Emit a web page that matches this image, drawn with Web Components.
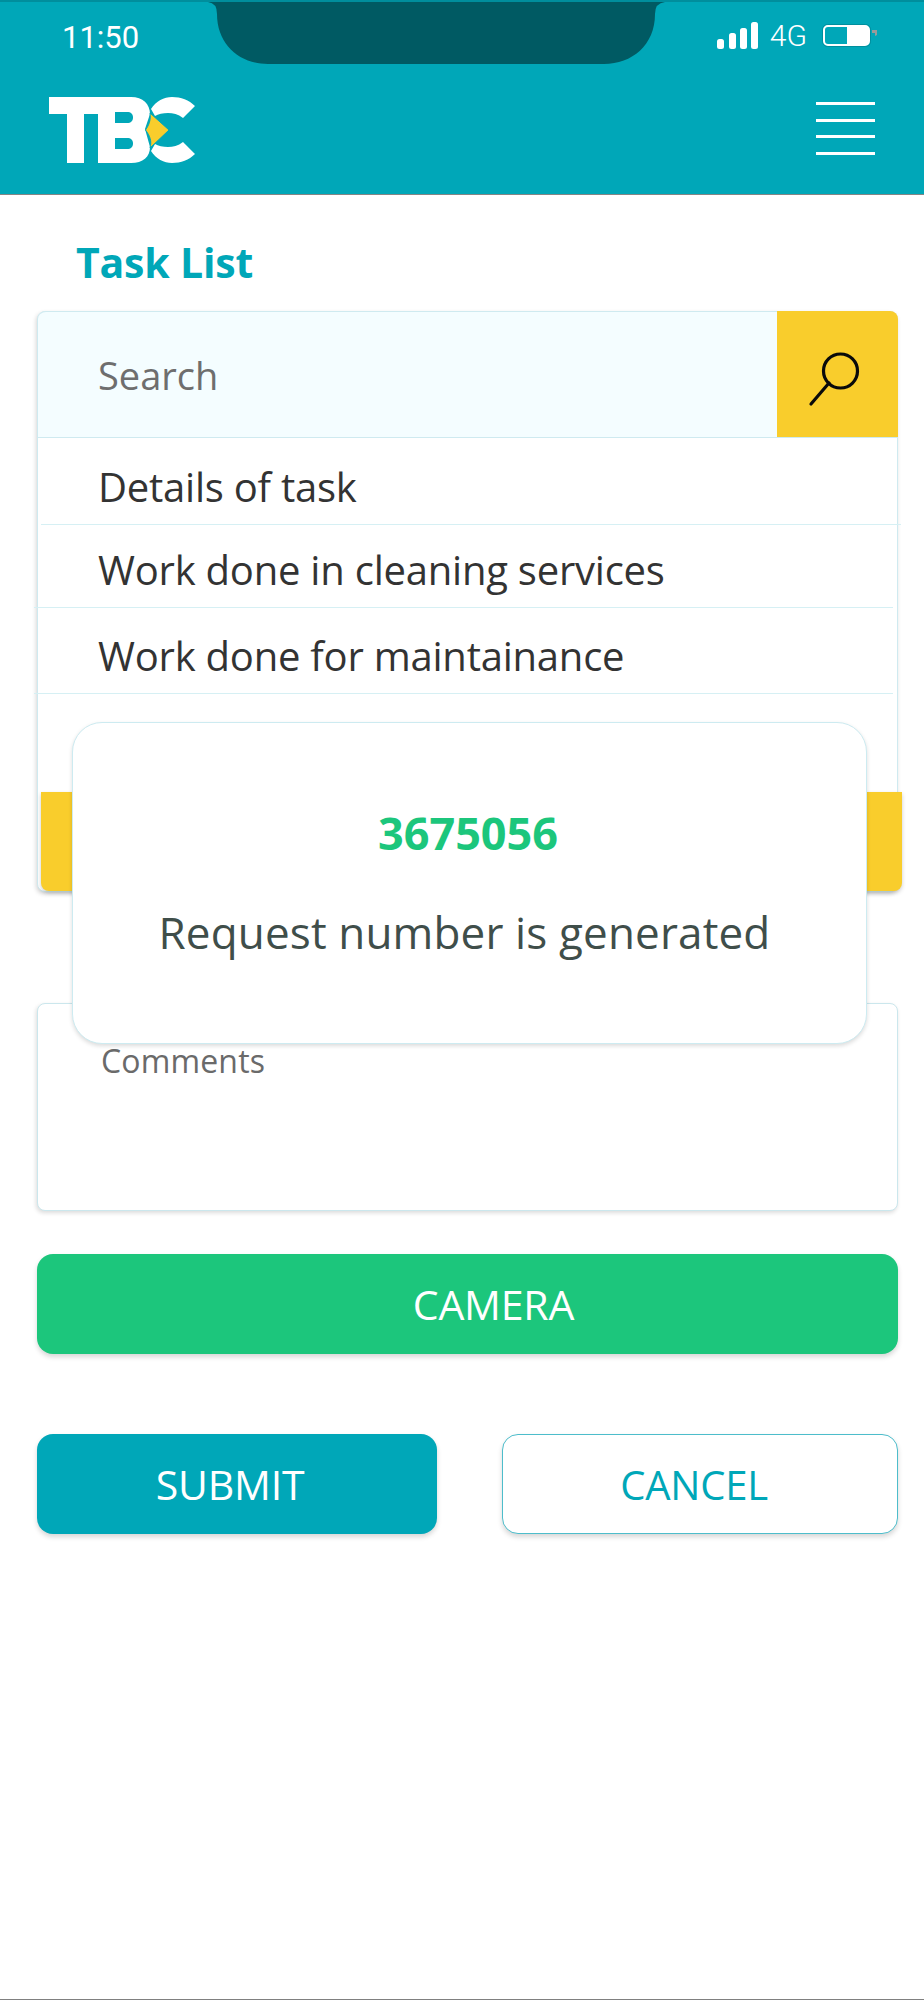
<!DOCTYPE html>
<html lang="en"><head><meta charset="utf-8"><title>Task List</title>
<style>
html,body{margin:0;padding:0;background:#fff}
body{font-family:"Open Sans","Noto Sans",sans-serif;color:#2b2b2b}
</style></head>
<body>
<app-page>
  <top-bar slot="header"></top-bar>
  <page-title>Task List</page-title>
  <task-card>
    <search-row placeholder="Search"></search-row>
    <task-row h="87" inset>Details of task</task-row>
    <task-row h="83" wide>Work done in cleaning services</task-row>
    <task-row h="86" wide>Work done for maintainance</task-row>
  </task-card>
  <comments-box>Comments</comments-box>
  <action-button kind="green" style="margin-top:43px" shift="52">CAMERA</action-button>
  <button-row>
    <action-button kind="teal" style="width:400px" shift="-14">SUBMIT</action-button>
    <action-button kind="outline" style="width:396px;font-size:40px" shift="-12">CANCEL</action-button>
  </button-row>
  <result-modal slot="overlay"><span slot="num">3675056</span>Request number is generated</result-modal>
</app-page>
<script>
function def(name, css, html, init){
  customElements.define(name, class extends HTMLElement{
    constructor(){super();const r=this.attachShadow({mode:'open'});r.innerHTML='<style>'+css+'</style>'+html;}
    connectedCallback(){ if(init) init(this, this.shadowRoot); }
  });
}
def('app-page',`
  :host{display:flex;flex-direction:column;min-height:2000px;position:relative;box-sizing:border-box;border-bottom:1px solid #808080;overflow:hidden;background:#fff}
  main{display:flex;flex-direction:column;padding:0 26px 0 37px}
`,`<slot name="header"></slot><main><slot></slot></main><slot name="overlay"></slot>`);

def('top-bar',`
  :host{display:block;position:relative;height:195px;box-sizing:border-box;background:#00A7B8;border-top:2px solid #008E9D;border-bottom:1px solid #858585;color:#fff}
  .status{display:flex;align-items:center;height:72px;padding:0 47px 0 62px;font-family:Roboto,sans-serif}
  .time{font-size:31px;line-height:1;margin-top:-2px}
  .right{margin-left:auto;margin-top:-5px;display:flex;align-items:center;gap:12px}
  .g4{font-size:30px;font-weight:300;line-height:1}
  .nav{display:flex;align-items:center;justify-content:space-between;padding:23px 49px 0 49px}
  .menu{display:flex;flex-direction:column;gap:13.6px;width:59px;margin-top:-4px}
  .menu i{display:block;height:3px;background:#fff}
  .notch{position:absolute;left:0;top:0}
  svg{display:block}
`,`
  <svg class="notch" width="924" height="66" viewBox="0 0 924 66"><path fill="#005A63" d="M208 0Q217 1 217 12C217 43 240 62 268 62H604C632 62 655 43 655 12Q655 1 665 0Z"/></svg>
  <div class="status">
    <span class="time">11:50</span>
    <div class="right">
      <svg width="41" height="28" viewBox="0 0 41 28"><g fill="#fff"><rect x="0" y="17" width="7" height="10" rx="2.5"/><rect x="12" y="11" width="7" height="16" rx="2.5"/><rect x="23" y="6" width="7" height="21" rx="2.5"/><rect x="34" y="0" width="7" height="27" rx="2.5"/></g></svg>
      <span class="g4">4G</span>
      <svg width="56" height="26" viewBox="0 0 56 26" style="margin-left:2px"><rect x="1.500" y="1.500" width="48" height="22" rx="5" fill="#00A7B8" stroke="#008E9D"/><rect x="3" y="3" width="45" height="19" rx="4" fill="none" stroke="#fff" stroke-width="2"/><path d="M26 3H44a4 4 0 0 1 4 4V18a4 4 0 0 1-4 4H26Z" fill="#fff"/><path d="M51 7h5v5l-2 1v-3h-3Z" fill="#9a9a9a"/></svg>
    </div>
  </div>
  <div class="nav">
    <svg width="147" height="67" viewBox="49 97 147 67" role="img" aria-label="TBC logo">
      <path fill="#fff" d="M49 97H100V114H84V163H67V114H49Z"/>
      <path fill="#fff" fill-rule="evenodd" d="M98 97H131C143 97 150 104 150 114L145 129L150 147C150 157 143 163 131 163H98ZM115 112V123H127C131 123 133 121 133 117.500C133 114 131 112 127 112ZM115 138V149H127C131 149 133 147 133 143.500C133 140 131 138 127 138Z"/>
      <path fill="#fff" d="M151 109C156 101 164 97 172 97C181 97 189 100 195 106L183 118C178 114 173 113 168 113C163 113 158 114 155 116Z"/>
      <path fill="#fff" d="M151 151C156 159 164 163 172 163C181 163 189 160 195 154L183 142C178 146 173 147 168 147C163 147 158 146 155 144Z"/>
      <path fill="#F9CD2C" stroke="#00A7B8" stroke-width="1" d="M150 113L169 130L150 148C152 141 150 136 145.500 130C149 125 151 120 150 113Z"/>
    </svg>
    <div class="menu"><i></i><i></i><i></i><i></i></div>
  </div>`);

def('page-title',`
  :host{display:flex;align-items:center;height:116px;padding:18px 0 0 39px;box-sizing:border-box;font-size:41px;font-weight:700;color:#00A7B8;letter-spacing:-.2px;line-height:1}
`,`<slot></slot>`);

def('task-card',`
  :host{display:flex;flex-direction:column;height:581px;box-sizing:border-box;border:1px solid #CFEAF0;border-radius:8px;box-shadow:-1px 2px 4px rgba(0,0,0,.16);background:#fff}
  .cta{margin:auto -5px 0 3px;height:99px;background:#F9CD2C;border-radius:0 0 8px 8px;box-shadow:0 2px 4px rgba(0,0,0,.2)}
`,`<slot></slot><div class="cta"></div>`);

def('search-row',`
  :host{display:flex;height:127px;box-sizing:border-box;border-bottom:1px solid #CFEAF0;margin:-1px -1px 0 0}
  .field{flex:1;display:flex;align-items:center;padding:0 0 0 60px;background:#F4FDFF;font-size:38px;color:#6e6e6e;border-top:1px solid #CFEAF0;border-radius:8px 0 0 0}
  .btn{width:121px;background:#F9CD2C;border-radius:0 8px 0 0;display:flex;align-items:center;justify-content:center}
  svg{display:block}
`,`<div class="field"></div><div class="btn"><svg width="121" height="126" viewBox="0 0 121 126"><circle cx="63.500" cy="60" r="17" fill="none" stroke="#0a0a0a" stroke-width="3.200"/><path d="M52 72L34 93" stroke="#0a0a0a" stroke-width="3.200" stroke-linecap="round" fill="none"/></svg></div>`,
(el,r)=>{r.querySelector('.field').textContent=el.getAttribute('placeholder');});

def('task-row',`
  :host{display:flex;align-items:flex-end;box-sizing:border-box;padding:0 0 12px 60px;border-bottom:1px solid #D6F0F4;font-size:40px;letter-spacing:-.23px;line-height:50px;color:#333}
  :host([wide]){margin:0 4px 0 -4px;padding-left:64px}
  :host([inset]){margin:0 -4px 0 3px;padding-left:57px}
`,`<slot></slot>`,(el)=>{el.style.height=el.getAttribute('h')+'px';});

def('comments-box',`
  :host{display:block;margin-top:111px;height:208px;box-sizing:border-box;border:1px solid #CBE7ED;border-radius:8px;box-shadow:-1px 2px 4px rgba(0,0,0,.14);padding:37px 0 0 63px;font-size:32px;letter-spacing:.15px;line-height:40px;color:#6a6a6a;background:#fff}
`,`<slot></slot>`);

def('action-button',`
  :host{display:flex;align-items:center;justify-content:center;height:100px;box-sizing:border-box;border-radius:16px;font-size:41px;letter-spacing:-.2px;box-shadow:0 3px 5px rgba(0,0,0,.16);color:#fff}
  :host([kind=green]){background:#1CC67C}
  :host([kind=teal]){background:#00A7B8}
  :host([kind=outline]){background:#fff;color:#00A7B8;border:1px solid #4DBDCB}
  .t{display:block}
`,`<span class="t"><slot></slot></span>`,(el,r)=>{const s=+el.getAttribute('shift')||0;r.querySelector('.t').style.cssText=s>0?'padding-left:'+s+'px':'padding-right:'+(-s)+'px';});

def('button-row',`
  :host{display:flex;justify-content:space-between;margin-top:80px}
`,`<slot></slot>`);

def('result-modal',`
  :host{position:absolute;left:72px;top:722px;width:795px;height:322px;box-sizing:border-box;background:#fff;border:1.500px solid #CDEBF1;border-radius:30px;box-shadow:0 2px 4px rgba(0,0,0,.14);display:flex;flex-direction:column;align-items:center;padding-top:80px}
  .n{font-size:45px;font-weight:700;color:#1CC67C;line-height:60px;padding-right:3px}
  .m{font-size:44px;color:#3F4E4A;line-height:60px;margin-top:39px;letter-spacing:.15px;padding-right:10px}
`,`<div class="n"><slot name="num"></slot></div><div class="m"><slot></slot></div>`);
</script>
</body></html>
